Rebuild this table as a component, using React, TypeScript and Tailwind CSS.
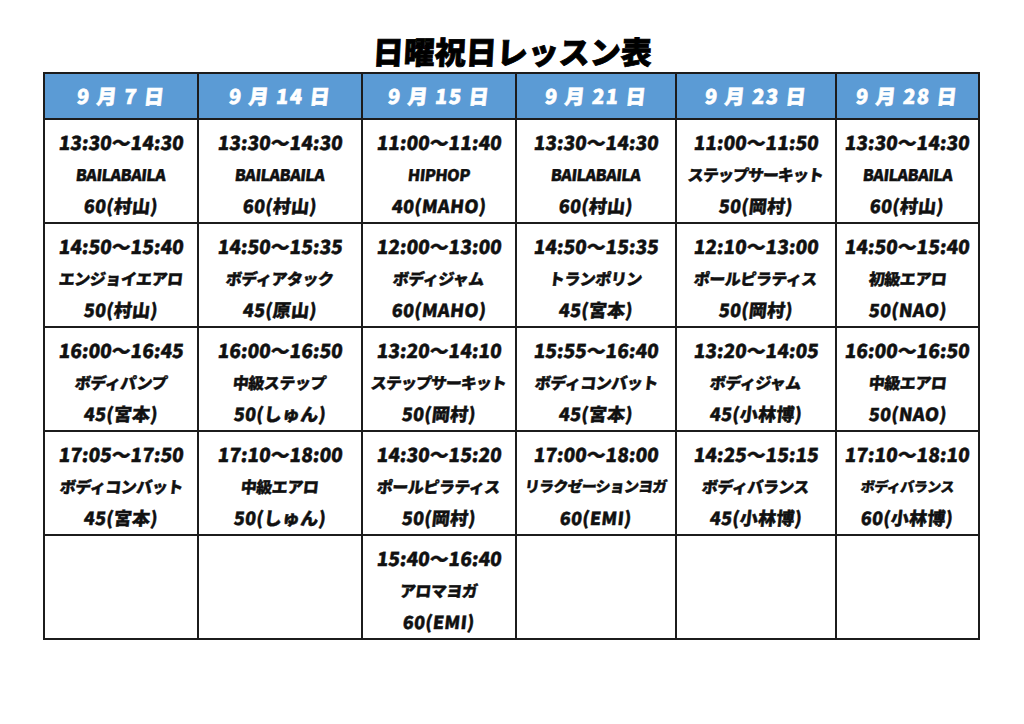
import React from "react";

type Lesson = { time: string; name: string; teacher: string; nameCls?: string } | null;

const days = ["9 月 7 日", "9 月 14 日", "9 月 15 日", "9 月 21 日", "9 月 23 日", "9 月 28 日"];

const cols: Lesson[][] = [
  [
    { time: "13:30～14:30", name: "BAILABAILA", teacher: "60(村山)" },
    { time: "14:50～15:40", name: "エンジョイエアロ", teacher: "50(村山)" },
    { time: "16:00～16:45", name: "ボディパンプ", teacher: "45(宮本)" },
    { time: "17:05～17:50", name: "ボディコンバット", teacher: "45(宮本)" },
    null,
  ],
  [
    { time: "13:30～14:30", name: "BAILABAILA", teacher: "60(村山)" },
    { time: "14:50～15:35", name: "ボディアタック", teacher: "45(原山)" },
    { time: "16:00～16:50", name: "中級ステップ", teacher: "50(しゅん)" },
    { time: "17:10～18:00", name: "中級エアロ", teacher: "50(しゅん)" },
    null,
  ],
  [
    { time: "11:00～11:40", name: "HIPHOP", teacher: "40(MAHO)" },
    { time: "12:00～13:00", name: "ボディジャム", teacher: "60(MAHO)" },
    { time: "13:20～14:10", name: "ステップサーキット", teacher: "50(岡村)", nameCls: "text-[16px] tracking-[-1px]" },
    { time: "14:30～15:20", name: "ポールピラティス", teacher: "50(岡村)" },
    { time: "15:40～16:40", name: "アロマヨガ", teacher: "60(EMI)" },
  ],
  [
    { time: "13:30～14:30", name: "BAILABAILA", teacher: "60(村山)" },
    { time: "14:50～15:35", name: "トランポリン", teacher: "45(宮本)" },
    { time: "15:55～16:40", name: "ボディコンバット", teacher: "45(宮本)" },
    { time: "17:00～18:00", name: "リラクゼーションヨガ", teacher: "60(EMI)", nameCls: "text-[15px] tracking-[-0.8px]" },
    null,
  ],
  [
    { time: "11:00～11:50", name: "ステップサーキット", teacher: "50(岡村)", nameCls: "text-[16px] tracking-[-1px]" },
    { time: "12:10～13:00", name: "ポールピラティス", teacher: "50(岡村)" },
    { time: "13:20～14:05", name: "ボディジャム", teacher: "45(小林博)" },
    { time: "14:25～15:15", name: "ボディバランス", teacher: "45(小林博)" },
    null,
  ],
  [
    { time: "13:30～14:30", name: "BAILABAILA", teacher: "60(村山)" },
    { time: "14:50～15:40", name: "初級エアロ", teacher: "50(NAO)" },
    { time: "16:00～16:50", name: "中級エアロ", teacher: "50(NAO)" },
    { time: "17:10～18:10", name: "ボディバランス", teacher: "60(小林博)", nameCls: "text-[14px] tracking-[-0.5px]" },
    null,
  ],
];

function Cell({ l }: { l: Lesson }) {
  return (
    <div className="bg-white h-[102px] flex flex-col items-center pt-[6px] text-[#111] font-black [-webkit-text-stroke:0.4px_#111]">
      {l && (
        <>
          <div className="h-[33px] flex items-center text-[19px] leading-none -skew-x-6 whitespace-nowrap">{l.time}</div>
          <div className={"h-[33px] flex items-center leading-none -skew-x-6 whitespace-nowrap " + (l.nameCls ?? "text-[16px] tracking-[-0.5px]")}>
            {l.name}
          </div>
          <div className="h-[34px] flex items-center text-[18px] leading-none -skew-x-6 whitespace-nowrap tracking-[0.3px]">{l.teacher}</div>
        </>
      )}
    </div>
  );
}

export default function App() {
  return (
    <div className="w-[1024px] h-[724px] bg-white font-['Noto_Sans_CJK_JP',sans-serif]">
      <div className="h-[72px] flex items-center justify-center pt-[28px]">
        <h1 className="text-[31px] leading-none font-black text-black -skew-x-3 [-webkit-text-stroke:0.8px_black]">日曜祝日レッスン表</h1>
      </div>
      <div className="ml-[43px] w-[937px] bg-[#1c1c1c] p-[2px] grid grid-cols-[152px_162px_152px_158px_158px_141px] gap-[2px]">
        {days.map((d) => (
          <div key={d} className="bg-[#5b9bd5] h-[44px] flex items-center justify-center text-white font-black text-[20px] leading-none whitespace-pre [-webkit-text-stroke:0.6px_white]">
            <span className="-skew-x-6 inline-block tracking-[1.5px]">{d}</span>
          </div>
        ))}
        {[0, 1, 2, 3, 4].map((r) => cols.map((c, ci) => <Cell key={`${r}-${ci}`} l={c[r]} />))}
      </div>
    </div>
  );
}
